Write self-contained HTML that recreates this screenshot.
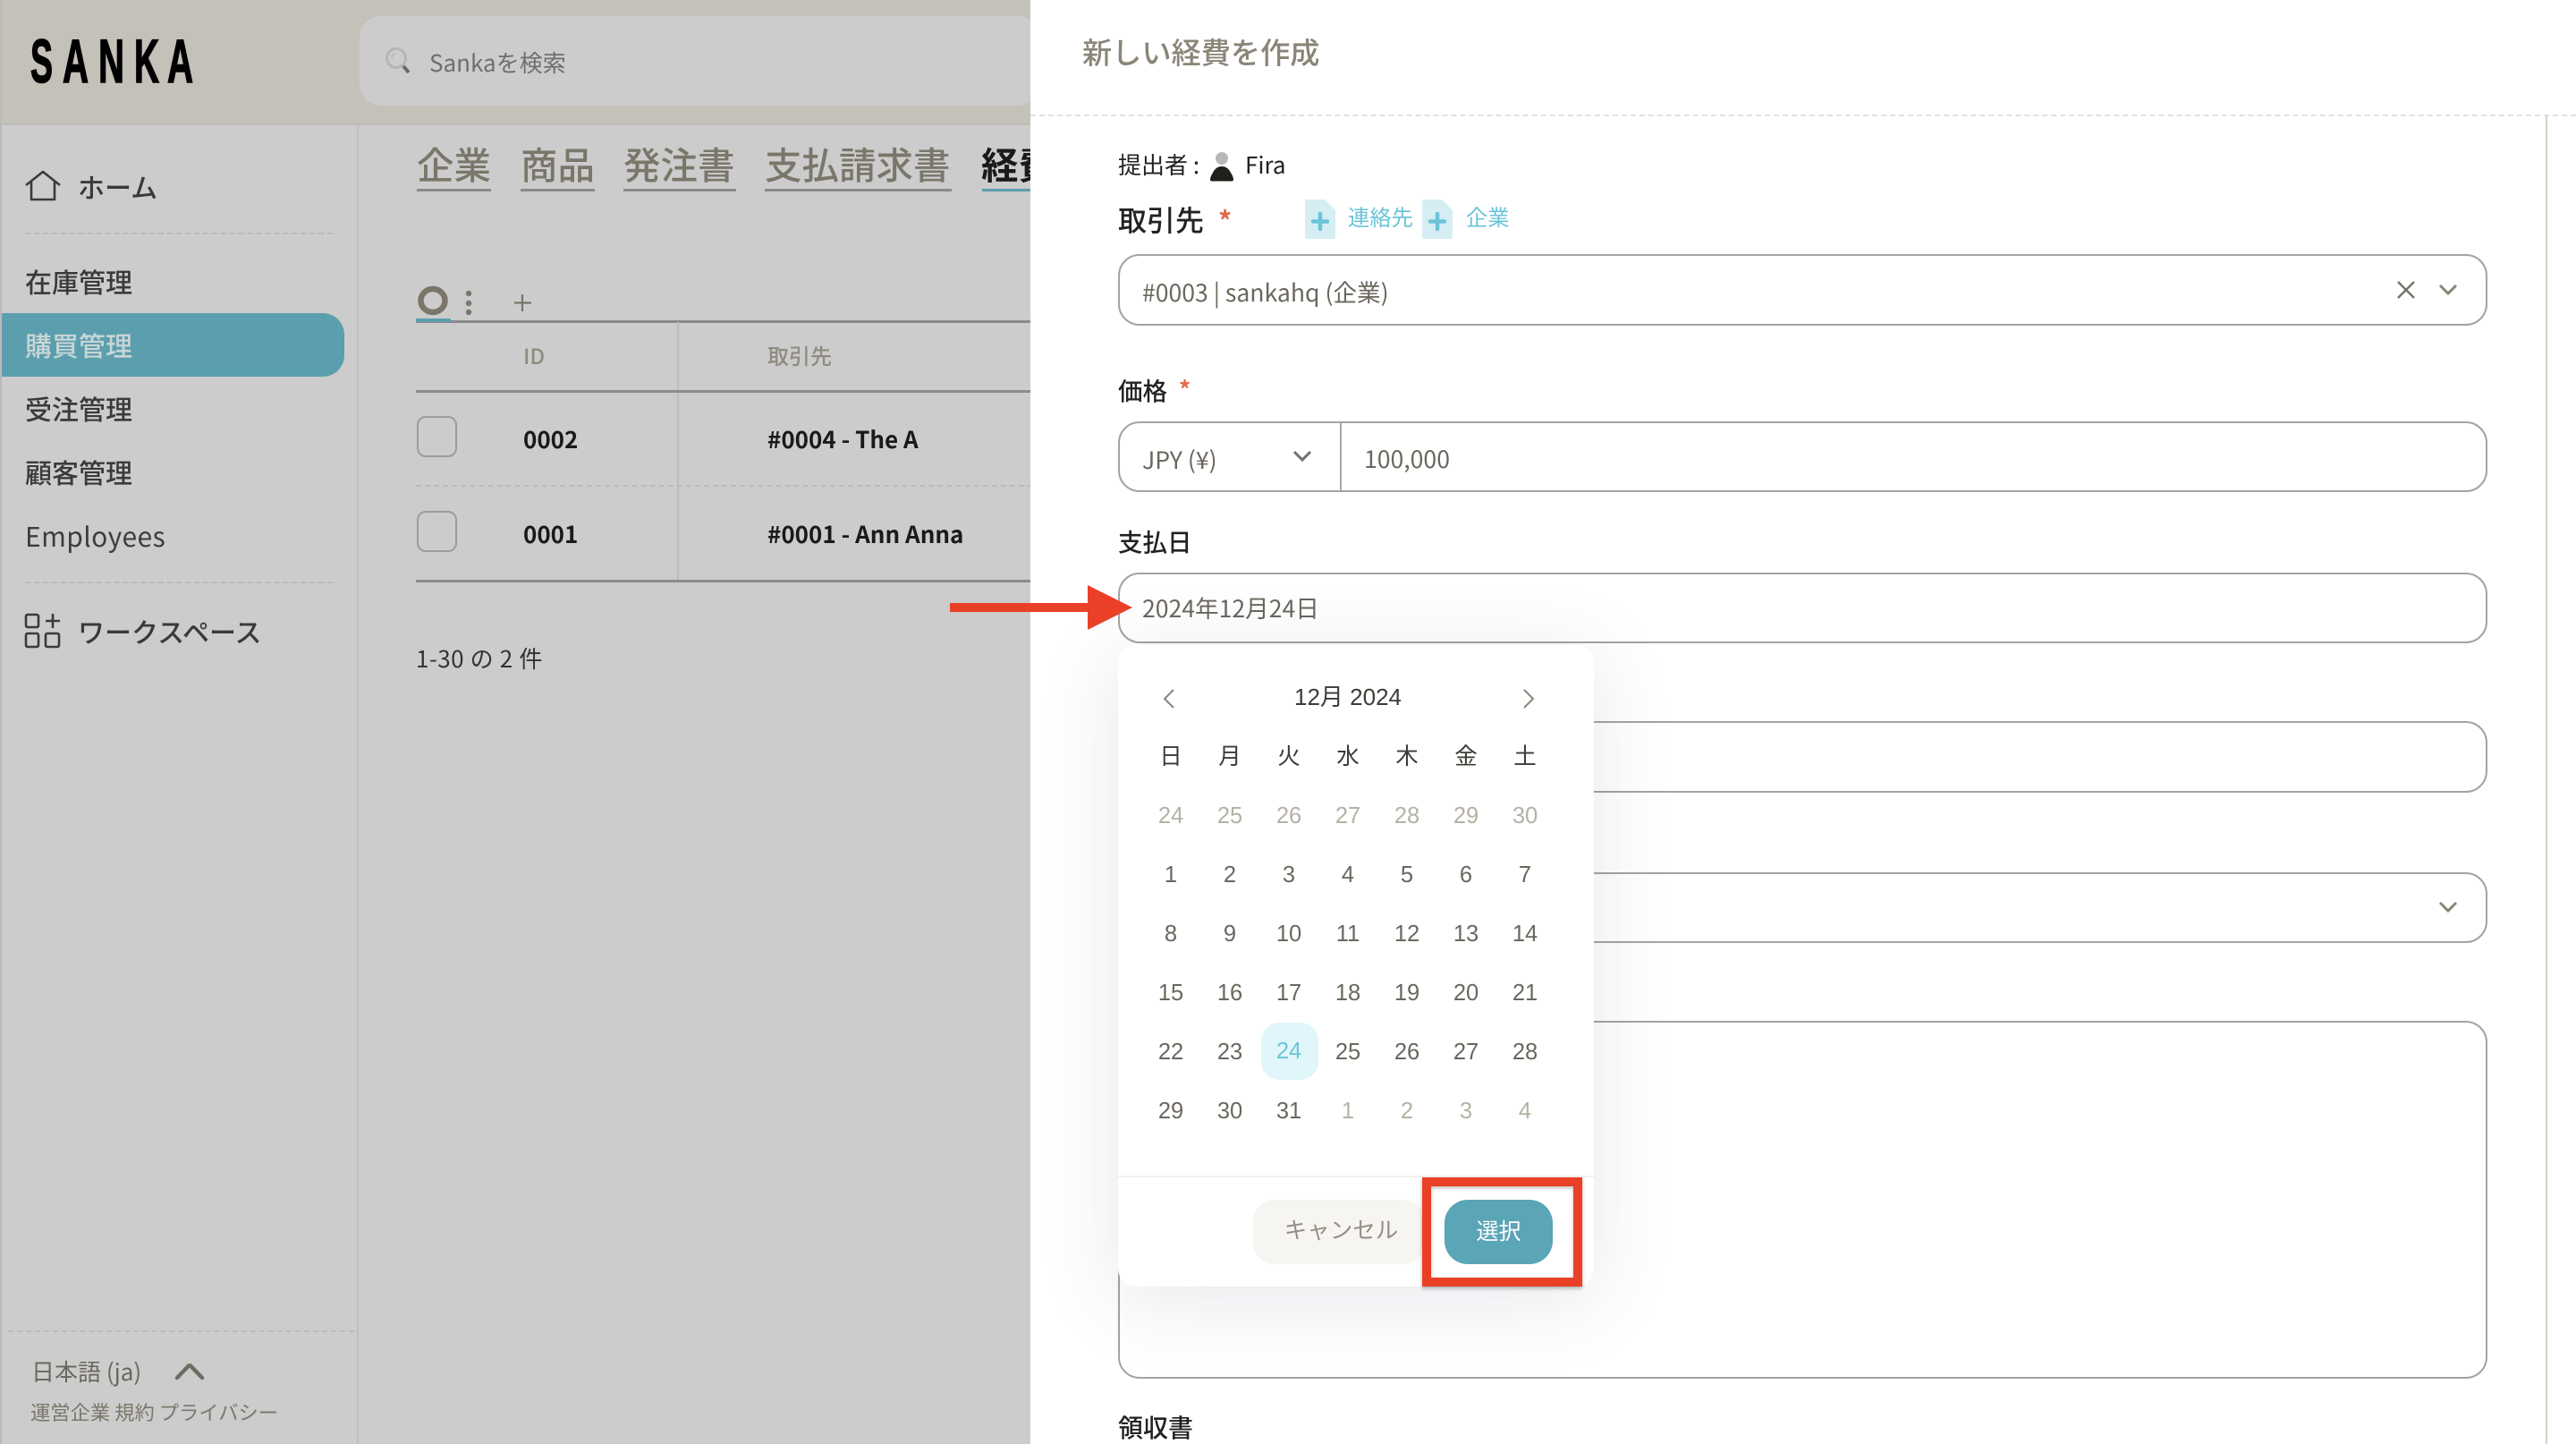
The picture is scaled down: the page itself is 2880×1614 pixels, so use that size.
<!DOCTYPE html>
<html lang="ja"><head><meta charset="utf-8"><title>Sanka</title>
<style>
*{box-sizing:border-box;margin:0;padding:0}
html,body{width:2880px;height:1614px;overflow:hidden;background:#ccc}
body{position:relative;font-family:"Noto Sans CJK JP","Liberation Sans",sans-serif}
.a{position:absolute}
.t{position:absolute;line-height:40px;height:40px;white-space:nowrap}
.nav{font-size:30px;color:#3a3a3a;left:28px;font-weight:500}
.tab{font-size:41.5px;color:#7a766a;top:162px;font-weight:500}
.ul{position:absolute;top:211px;height:3px;background:#8a8a86}
.dash{position:absolute;height:0;border-top:2px dashed #bababa}
.bold{font-size:26px;font-weight:700;color:#1a1a1a}
.cb{position:absolute;left:466px;width:45px;height:46px;border:2px solid #9c9c9c;border-radius:10px}
.lbl{font-weight:500;color:#222;left:1250px}
.in{position:absolute;left:1250px;width:1531px;border:2px solid #a3a3a3;border-radius:24px;background:#fff}
.val{font-size:26.6px;color:#6b675e}
#cal{position:absolute;left:1250px;top:721px;width:532px;height:717px;background:#fff;border-radius:20px;box-shadow:0 14px 90px rgba(70,70,110,.13);font-family:"Liberation Sans","Noto Sans CJK JP",sans-serif}
#grid{position:absolute;left:26px;top:92px;display:grid;grid-template-columns:repeat(7,66px);grid-auto-rows:66px;font-size:25.5px;color:#6b675e}
#grid span{display:flex;align-items:center;justify-content:center}
#grid .w{color:#3d3b36;margin-top:-5px}
#grid .m{color:#b5b1a5}
#grid .s{color:#6cc4d8;background:#e0f6fb;border-radius:20px;height:64px;margin-top:0;margin-left:2px;margin-right:0;padding-right:2px}
</style></head><body>

<!-- header -->
<div class="a" style="left:0;top:0;width:1152px;height:139px;background:#c4c1b9"></div>
<div class="a" style="left:0;top:138px;width:1152px;height:2px;background:#bdbbb6"></div>
<div class="a" style="left:0;top:0;width:2px;height:1614px;background:#b9b9b9"></div>
<svg class="a" style="left:0;top:0" width="240" height="120" font-family="Liberation Sans" font-weight="700" font-size="69" fill="#000" stroke="#000" stroke-width="1.6">
<text x="34" y="92" textLength="25" lengthAdjust="spacingAndGlyphs">S</text>
<text x="70" y="92" textLength="29" lengthAdjust="spacingAndGlyphs">A</text>
<text x="110" y="92" textLength="29" lengthAdjust="spacingAndGlyphs">N</text>
<text x="150" y="92" textLength="28" lengthAdjust="spacingAndGlyphs">K</text>
<text x="187" y="92" textLength="29" lengthAdjust="spacingAndGlyphs">A</text>
</svg>
<div class="a" style="left:402px;top:18px;width:760px;height:100px;background:#ccc;border-radius:24px"></div>
<svg class="a" style="left:430px;top:52px" width="34" height="32" fill="none"><circle cx="13" cy="13" r="10.5" stroke="#b5b5b1" stroke-width="3"/><path d="M21 22l6 7" stroke="#6a6a66" stroke-width="4"/><path d="M8 13a5 5 0 0 1 4-5" stroke="#b5b5b1" stroke-width="1.5"/></svg>
<div class="t" style="left:480px;top:50px;font-size:26px;color:#6f6f6c">Sankaを検索</div>

<!-- sidebar -->
<div class="a" style="left:399px;top:140px;width:2px;height:1474px;background:#c0c0c0"></div>
<svg class="a" style="left:27px;top:190px" width="42" height="36" fill="none" stroke="#3a3a3a" stroke-width="2.6" stroke-linejoin="round"><path d="M2 17L21 2l19 15M8 13v20h26V13"/></svg>
<div class="t nav" style="left:87px;top:188px">ホーム</div>
<div class="dash" style="left:28px;top:260px;width:344px"></div>
<div class="t nav" style="top:294px">在庫管理</div>
<div class="a" style="left:2px;top:350px;width:383px;height:71px;background:#5b9fae;border-radius:0 24px 24px 0"></div>
<div class="t nav" style="top:365px;color:#c9d5d6">購買管理</div>
<div class="t nav" style="top:436px">受注管理</div>
<div class="t nav" style="top:507px">顧客管理</div>
<div class="t nav" style="top:578px;color:#3d3d3d;font-weight:400;letter-spacing:.4px">Employees</div>
<div class="dash" style="left:28px;top:650px;width:344px"></div>
<svg class="a" style="left:27px;top:685px" width="42" height="40" fill="none" stroke="#3a3a3a" stroke-width="2.6"><rect x="2" y="2" width="14" height="14" rx="2"/><rect x="2" y="23" width="14" height="15" rx="2"/><rect x="24" y="23" width="15" height="15" rx="2"/><path d="M32 1v16M24 9h16"/></svg>
<div class="t nav" style="left:87px;top:685px">ワークスペース</div>
<div class="a" style="left:9px;top:1487px;width:387px;border-top:2px dashed #bbb"></div>
<div class="t" style="left:35px;top:1513px;font-size:26px;color:#6b675e">日本語 (ja)</div>
<svg class="a" style="left:192px;top:1520px" width="40" height="24" fill="none"><path d="M5 20L18 6.500 h2L33 20" transform="translate(1,0)" stroke="#6f6b60" stroke-width="4.500" stroke-linecap="round" stroke-linejoin="round"/></svg>
<div class="t" style="left:34px;top:1558px;font-size:22.3px;color:#7b776c">運営企業 規約 プライバシー</div>

<!-- main tabs -->
<div class="t tab" style="left:466px">企業</div><div class="ul" style="left:466px;width:83px"></div>
<div class="t tab" style="left:582px">商品</div><div class="ul" style="left:582px;width:83px"></div>
<div class="t tab" style="left:697px">発注書</div><div class="ul" style="left:697px;width:126px"></div>
<div class="t tab" style="left:855px">支払請求書</div><div class="ul" style="left:855px;width:209px"></div>
<div class="t tab" style="left:1097px;color:#1a1a1a;font-weight:700">経費</div><div class="ul" style="left:1098px;width:60px;background:#5b9fae"></div>

<!-- toolbar -->
<svg class="a" style="left:460px;top:315px" width="140" height="44" fill="none"><ellipse cx="24" cy="21" rx="13.500" ry="13" stroke="#7a766a" stroke-width="6.500"/><circle cx="64" cy="13" r="3.200" fill="#7a766a"/><circle cx="64" cy="24" r="3.200" fill="#7a766a"/><circle cx="64" cy="34" r="3.200" fill="#7a766a"/><path d="M124 14v19M115 23.500h19" stroke="#7a766a" stroke-width="2.200"/></svg>
<div class="a" style="left:465px;top:358px;width:690px;height:2.500px;background:#8a8a8a"></div>
<div class="a" style="left:465px;top:356px;width:39px;height:4px;background:#5b9fae"></div>
<div class="a" style="left:757px;top:360px;width:1.500px;height:288px;background:#bdbdbd"></div>
<div class="t" style="left:585px;top:377px;font-size:24px;font-weight:500;color:#8f8b80">ID</div>
<div class="t" style="left:858px;top:377px;font-size:24px;font-weight:500;color:#8f8b80">取引先</div>
<div class="a" style="left:465px;top:436px;width:690px;height:2.500px;background:#8c8c8c"></div>
<div class="cb" style="top:465px"></div>
<div class="t bold" style="left:585px;top:471px">0002</div>
<div class="t bold" style="left:858px;top:471px">#0004 - The A</div>
<div class="dash" style="left:465px;top:542px;width:690px"></div>
<div class="cb" style="top:571px"></div>
<div class="t bold" style="left:585px;top:577px">0001</div>
<div class="t bold" style="left:858px;top:577px">#0001 - Ann Anna</div>
<div class="a" style="left:465px;top:648px;width:690px;height:2.500px;background:#8c8c8c"></div>
<div class="t" style="left:465px;top:716px;font-size:26px;letter-spacing:.4px;word-spacing:.5px;color:#333">1-30 の 2 件</div>

<!-- panel -->
<div class="a" style="left:1152px;top:0;width:1728px;height:1614px;background:#fff;overflow:hidden">
 <div style="position:absolute;left:-1152px;top:0;width:2880px;height:1614px">
  <div class="t" style="left:1210px;top:37px;font-size:33.2px;color:#8a8578;font-weight:500">新しい経費を作成</div>
  <div class="a" style="left:1152px;top:128px;width:1728px;border-top:2px dashed #e4e2dc"></div>
  <div class="a" style="left:2846px;top:130px;width:2px;height:1484px;background:#d5d2c5"></div>

  <div class="t" style="left:1250px;top:164px;font-size:26px;color:#222">提出者 :</div>
  <svg class="a" style="left:1352px;top:169px" width="28" height="34"><circle cx="14" cy="8" r="7" fill="#b8b8b8"/><path d="M1 32c0-2 1-5 3-8 2-4 5-7 10-7s8 3 10 7c2 3 3 6 3 8 0 1-1 1.500-2 1.500H3c-1 0-2-.500-2-1.500z" fill="#211f1c"/></svg>
  <div class="t" style="left:1392px;top:164px;font-size:26px;color:#222">Fira</div>

  <div class="t lbl" style="top:225px;font-size:32px">取引先</div>
  <div class="t" style="left:1362px;top:225px;font-size:30px;color:#e4684a;font-weight:700">*</div>
  <svg class="a" style="left:1459px;top:223px" width="34" height="44"><path d="M2 0h20l12 12v30a2 2 0 0 1-2 2H2a2 2 0 0 1-2-2V2a2 2 0 0 1 2-2z" fill="#d4eef4"/><path d="M17 16v17M9 24.500h16" stroke="#6cc4d8" stroke-width="4.500" stroke-linecap="round"/></svg>
  <div class="t" style="left:1507px;top:222px;font-size:24.3px;color:#6cc4d8">連絡先</div>
  <svg class="a" style="left:1590px;top:223px" width="34" height="44"><path d="M2 0h20l12 12v30a2 2 0 0 1-2 2H2a2 2 0 0 1-2-2V2a2 2 0 0 1 2-2z" fill="#d4eef4"/><path d="M17 16v17M9 24.500h16" stroke="#6cc4d8" stroke-width="4.500" stroke-linecap="round"/></svg>
  <div class="t" style="left:1639px;top:222px;font-size:24.3px;color:#6cc4d8">企業</div>

  <div class="in" style="top:284px;height:80px"></div>
  <div class="t val" style="left:1277px;top:306px">#0003 | sankahq (企業)</div>
  <svg class="a" style="left:2678px;top:312px" width="24" height="24" fill="none" stroke="#75716a" stroke-width="2.400"><path d="M3 3l18 18M21 3L3 21"/></svg>
  <svg class="a" style="left:2725px;top:316px" width="24" height="16" fill="none" stroke="#8a8578" stroke-width="3"><path d="M3 3l9 9 9-9"/></svg>

  <div class="t lbl" style="top:415px;font-size:27.500px">価格</div>
  <div class="t" style="left:1318px;top:415px;font-size:26px;color:#e4684a;font-weight:700">*</div>
  <div class="in" style="top:471px;height:79px"></div>
  <div class="a" style="left:1498px;top:472px;width:2px;height:77px;background:#a8a8a8"></div>
  <div class="t val" style="left:1277px;top:493px">JPY (¥)</div>
  <svg class="a" style="left:1444px;top:502px" width="24" height="16" fill="none" stroke="#75716a" stroke-width="3"><path d="M3 3l9 9 9-9"/></svg>
  <div class="t val" style="left:1525px;top:492px">100,000</div>

  <div class="t lbl" style="top:584px;font-size:27.500px">支払日</div>
  <div class="in" style="top:640px;height:79px"></div>
  <div class="t val" style="left:1277px;top:659px">2024年12月24日</div>

  <div class="in" style="top:806px;height:80px"></div>
  <div class="in" style="top:975px;height:79px"></div>
  <svg class="a" style="left:2725px;top:1006px" width="24" height="16" fill="none" stroke="#8a8578" stroke-width="3"><path d="M3 3l9 9 9-9"/></svg>
  <div class="in" style="top:1141px;height:400px"></div>
  <div class="t lbl" style="top:1575px;font-size:28px">領収書</div>

  <div id="cal">
   <div class="t" style="left:0;top:38px;width:514px;text-align:center;font-size:26px;color:#3d3b36">12月 2024</div>
   <svg class="a" style="left:49px;top:48px" width="16" height="24" fill="none" stroke="#8a8578" stroke-width="2"><path d="M13 2L3 12l10 10"/></svg>
   <svg class="a" style="left:451px;top:48px" width="16" height="24" fill="none" stroke="#8a8578" stroke-width="2"><path d="M3 2l10 10L3 22"/></svg>
   <div id="grid">
    <span class="w">日</span><span class="w">月</span><span class="w">火</span><span class="w">水</span><span class="w">木</span><span class="w">金</span><span class="w">土</span>
    <span class="m">24</span><span class="m">25</span><span class="m">26</span><span class="m">27</span><span class="m">28</span><span class="m">29</span><span class="m">30</span>
    <span>1</span><span>2</span><span>3</span><span>4</span><span>5</span><span>6</span><span>7</span>
    <span>8</span><span>9</span><span>10</span><span>11</span><span>12</span><span>13</span><span>14</span>
    <span>15</span><span>16</span><span>17</span><span>18</span><span>19</span><span>20</span><span>21</span>
    <span>22</span><span>23</span><span class="s">24</span><span>25</span><span>26</span><span>27</span><span>28</span>
    <span>29</span><span>30</span><span>31</span><span class="m">1</span><span class="m">2</span><span class="m">3</span><span class="m">4</span>
   </div>
   <div class="a" style="left:0;top:593px;width:532px;height:2px;background:#f4f1ec"></div>
   <div class="a" style="left:151px;top:620px;width:192px;height:72px;background:#f6f5f2;border-radius:24px;color:#948f84;font-size:25.5px;line-height:70px;text-align:center;padding-left:5px">キャンセル</div>
   <div class="a" style="left:365px;top:620px;width:121px;height:72px;background:#5aa5b6;border-radius:26px;color:#fff;font-size:25px;line-height:72px;text-align:center">選択</div>
  </div>
 </div>
</div>

<!-- annotations -->
<div class="a" style="left:1590px;top:1316px;width:179px;height:122px;border:10px solid #e94027;box-shadow:0 2px 4px rgba(0,0,0,.3),inset 0 2px 4px rgba(0,0,0,.25)"></div>
<svg class="a" style="left:1055px;top:645px" width="220" height="70"><path d="M7 29h154V9l50 25-50 25V39H7z" fill="#e94027"/></svg>
</body></html>
